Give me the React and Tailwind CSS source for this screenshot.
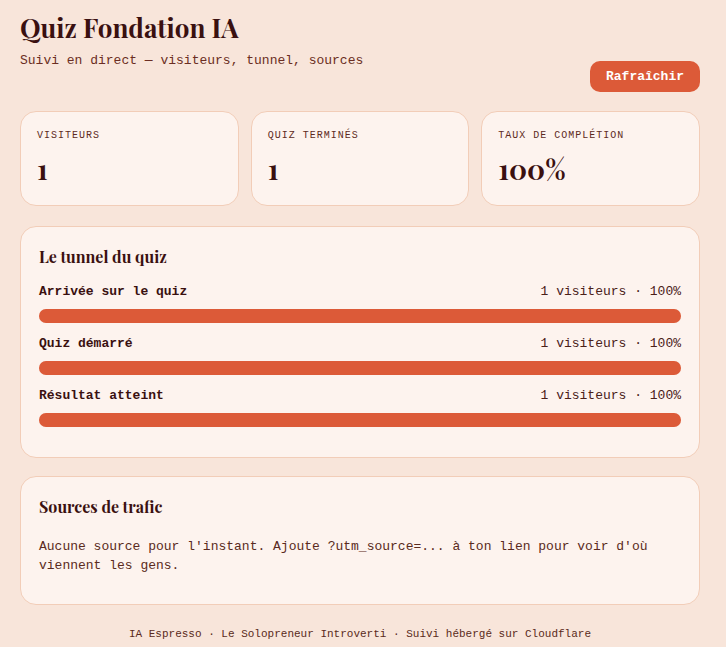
import React from 'react';

const serif = "font-['Playfair_Display','Liberation_Serif',serif]";
const mono = "font-['Courier_New','Liberation_Mono',monospace]";

const stats = [
  { label: 'Visiteurs', value: '1' },
  { label: 'Quiz terminés', value: '1' },
  { label: 'Taux de complétion', value: '100%' },
];

const steps = [
  { name: 'Arrivée sur le quiz', count: 1, pct: 100 },
  { name: 'Quiz démarré', count: 1, pct: 100 },
  { name: 'Résultat atteint', count: 1, pct: 100 },
];

const StatCard = ({ label, value }) => (
  <div className="rounded-2xl border border-[#f2cdb8] bg-[#fdf3ee] px-4 pt-4 pb-[21px]">
    <p className={`${mono} text-[10px] leading-[15px] uppercase tracking-[1px] text-[#5e2a22]`}>{label}</p>
    <p className={`${serif} mt-[11px] text-[28px] leading-[30px] font-bold text-[#3a1010]`}>{value}</p>
  </div>
);

const FunnelRow = ({ step }) => (
  <div className="mb-[11px]">
    <div className="flex items-center justify-between text-[13px] leading-5">
      <span className="font-bold text-[#3a1010]">{step.name}</span>
      <span className="text-[#4a2018]">
        {step.count} visiteurs · {step.pct}%
      </span>
    </div>
    <div className="mt-[7px] h-[14px] w-full rounded-full bg-[#f6dccd]">
      <div className="h-full rounded-full bg-[#dc5a38]" style={{ width: `${step.pct}%` }} />
    </div>
  </div>
);

export default function App() {
  return (
    <div className={`${mono} min-h-screen bg-[#f8e5da] px-5 pt-[10px] pb-1 text-[#5a2a20]`}>
      <div className="max-w-[680px]">
        <header className="flex items-end justify-between">
          <div className="pb-[23px]">
            <h1 className={`${serif} text-[26px] leading-[36px] font-bold text-[#3a1010]`}>Quiz Fondation IA</h1>
            <p className="mt-[6px] text-[13px] leading-[18px] text-[#6b2d22]">
              Suivi en direct — visiteurs, tunnel, sources
            </p>
          </div>
          <button className={`${mono} mb-px h-[31px] rounded-[10px] bg-[#dc5a38] px-4 text-[13px] font-bold text-white`}>
            Rafraîchir
          </button>
        </header>

        <div className="mt-[18px] grid grid-cols-3 gap-3">
          {stats.map((s) => (
            <StatCard key={s.label} {...s} />
          ))}
        </div>

        <section className="mt-5 rounded-2xl border border-[#f2cdb8] bg-[#fdf3ee] px-[18px] pt-[18px] pb-[19px]">
          <h2 className={`${serif} mb-[13px] text-[16px] leading-6 font-bold text-[#3a1010]`}>Le tunnel du quiz</h2>
          {steps.map((step) => (
            <FunnelRow key={step.name} step={step} />
          ))}
        </section>

        <section className="mt-[18px] rounded-2xl border border-[#f2cdb8] bg-[#fdf3ee] p-[18px]">
          <h2 className={`${serif} text-[16px] leading-6 font-bold text-[#3a1010]`}>Sources de trafic</h2>
          <p className="mt-[18px] mb-[11px] text-[13px] leading-[19px] text-[#5a2a20]">
            Aucune source pour l'instant. Ajoute ?utm_source=... à ton lien pour voir d'où viennent les gens.
          </p>
        </section>

        <footer className="mt-[21px] text-center text-[11px] leading-4 text-[#5a2a20]">
          IA Espresso · Le Solopreneur Introverti · Suivi hébergé sur Cloudflare
        </footer>
      </div>
    </div>
  );
}
